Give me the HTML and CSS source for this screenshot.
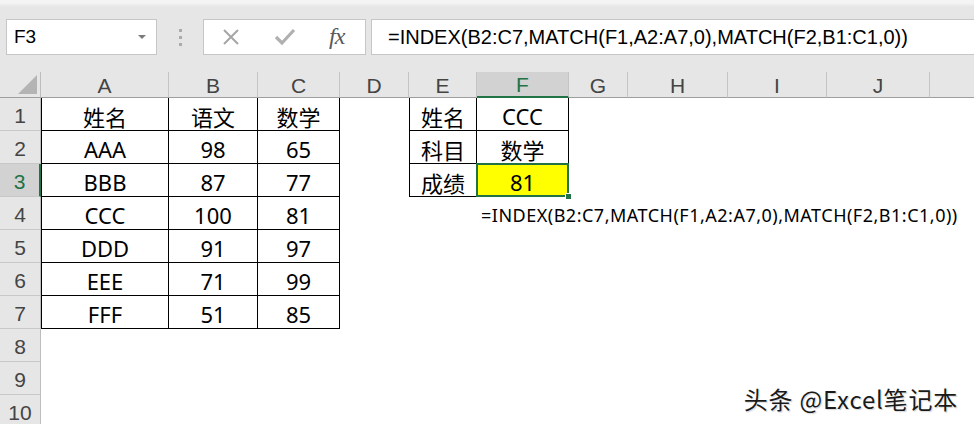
FILE: index.html
```html
<!DOCTYPE html>
<html lang="zh-CN">
<head>
<meta charset="utf-8">
<title>Excel INDEX MATCH</title>
<link rel="stylesheet" href="styles.css">
</head>
<body>
<div class="app">
  <div class="toolbar">
    <div class="namebox"><span class="ref">F3</span><span class="caret"></span></div>
    <div class="grip"><i></i><i></i><i></i></div>
    <div class="btns">
      <svg class="ico" width="20" height="20" viewBox="0 0 20 20"><path d="M3 3 L17 17 M17 3 L3 17" stroke="#a6a6a6" stroke-width="2" fill="none"/></svg>
      <svg class="ico" width="22" height="20" viewBox="0 0 22 20"><path d="M2 10 L8 16 L20 3" stroke="#b0b0b0" stroke-width="3.2" fill="none"/></svg>
      <span class="fx">fx</span>
    </div>
    <div class="formula">=INDEX(B2:C7,MATCH(F1,A2:A7,0),MATCH(F2,B1:C1,0))</div>
  </div>
  <div class="sheet">
    <div class="corner"><span class="tri"></span></div>
    <div class="ch">A</div><div class="ch">B</div><div class="ch">C</div><div class="ch">D</div><div class="ch">E</div><div class="ch sel">F</div><div class="ch">G</div><div class="ch">H</div><div class="ch">I</div><div class="ch">J</div><div class="ch last"></div>

    <div class="rh">1</div><div class="c t tl">姓名</div><div class="c t">语文</div><div class="c t">数学</div><div class="c"></div><div class="c t tl">姓名</div><div class="c t">CCC</div><div class="c"></div><div class="c"></div><div class="c"></div><div class="c"></div><div class="c"></div>
    <div class="rh">2</div><div class="c t tl">AAA</div><div class="c t">98</div><div class="c t">65</div><div class="c"></div><div class="c t tl">科目</div><div class="c t">数学</div><div class="c"></div><div class="c"></div><div class="c"></div><div class="c"></div><div class="c"></div>
    <div class="rh sel">3</div><div class="c t tl">BBB</div><div class="c t">87</div><div class="c t">77</div><div class="c"></div><div class="c t tl">成绩</div><div class="c t active">81<span class="handle"></span></div><div class="c"></div><div class="c"></div><div class="c"></div><div class="c"></div><div class="c"></div>
    <div class="rh">4</div><div class="c t tl">CCC</div><div class="c t">100</div><div class="c t">81</div><div class="c"></div><div class="c"></div><div class="c note">=INDEX(B2:C7,MATCH(F1,A2:A7,0),MATCH(F2,B1:C1,0))</div><div class="c"></div><div class="c"></div><div class="c"></div><div class="c"></div><div class="c"></div>
    <div class="rh">5</div><div class="c t tl">DDD</div><div class="c t">91</div><div class="c t">97</div><div class="c"></div><div class="c"></div><div class="c"></div><div class="c"></div><div class="c"></div><div class="c"></div><div class="c"></div><div class="c"></div>
    <div class="rh">6</div><div class="c t tl">EEE</div><div class="c t">71</div><div class="c t">99</div><div class="c"></div><div class="c"></div><div class="c"></div><div class="c"></div><div class="c"></div><div class="c"></div><div class="c"></div><div class="c"></div>
    <div class="rh">7</div><div class="c t tl">FFF</div><div class="c t">51</div><div class="c t">85</div><div class="c"></div><div class="c"></div><div class="c"></div><div class="c"></div><div class="c"></div><div class="c"></div><div class="c"></div><div class="c"></div>
    <div class="rh">8</div><div class="c"></div><div class="c"></div><div class="c"></div><div class="c"></div><div class="c"></div><div class="c"></div><div class="c"></div><div class="c"></div><div class="c"></div><div class="c"></div><div class="c"></div>
    <div class="rh">9</div><div class="c"></div><div class="c"></div><div class="c"></div><div class="c"></div><div class="c"></div><div class="c"></div><div class="c"></div><div class="c"></div><div class="c"></div><div class="c"></div><div class="c"></div>
    <div class="rh">10</div><div class="c"></div><div class="c"></div><div class="c"></div><div class="c"></div><div class="c"></div><div class="c"></div><div class="c"></div><div class="c"></div><div class="c"></div><div class="c"></div><div class="c"></div>
  </div>
  <div class="watermark">头条 @Excel笔记本</div>
</div>
</body>
</html>
```

FILE: styles.css
```css
* { box-sizing: border-box; }
html, body { margin: 0; padding: 0; }
body {
  width: 974px;
  height: 424px;
  overflow: hidden;
  background: #ffffff;
  font-family: "Noto Sans", "Noto Sans CJK SC", sans-serif;
}
.app {
  position: relative;
  width: 974px;
  height: 424px;
  overflow: hidden;
}
.toolbar {
  height: 72px;
  background: linear-gradient(#f4f4f4 0, #f4f4f4 3px, #e6e6e6 7px, #e6e6e6 100%);
  display: flex;
  align-items: flex-start;
  padding: 19px 0 0 6px;
}
.namebox {
  width: 151px;
  height: 36px;
  background: #fff;
  border: 1px solid #c6c6c6;
  display: flex;
  align-items: center;
  justify-content: space-between;
  padding: 0 10px 0 7px;
}
.ref {
  font-family: "Liberation Sans", Arial, sans-serif;
  font-size: 19px;
  color: #000;
}
.caret {
  width: 0;
  height: 0;
  border-left: 4px solid transparent;
  border-right: 4px solid transparent;
  border-top: 4px solid #7a7a7a;
}
.grip {
  width: 46px;
  height: 36px;
  display: flex;
  flex-direction: column;
  align-items: center;
  justify-content: center;
  gap: 4px;
}
.grip i {
  display: block;
  width: 3px;
  height: 3px;
  background: #ababab;
}
.btns {
  width: 163px;
  height: 36px;
  background: #fff;
  border: 1px solid #c6c6c6;
  display: flex;
  align-items: center;
  padding: 0 0 0 17px;
  gap: 33px;
}
.fx {
  font-family: "Liberation Serif", "DejaVu Serif", serif;
  font-style: italic;
  font-size: 24px;
  color: #595959;
  letter-spacing: -1px;
  margin-top: -2px;
}
.formula {
  flex: 1;
  height: 36px;
  margin-left: 5px;
  margin-right: -2px;
  background: #fff;
  border: 1px solid #c6c6c6;
  font-family: "Liberation Sans", Arial, sans-serif;
  font-size: 20px;
  line-height: 34px;
  padding-left: 16px;
  color: #000;
  white-space: nowrap;
}
.sheet {
  display: grid;
  grid-template-columns: 41px 128px 89px 82px 69px 68px 92px 59px 100px 99px 103px 1fr;
  grid-template-rows: 26px repeat(10, 33px);
  font-size: 22px;
}
.corner {
  background: #e6e6e6;
  border-right: 1px solid #bdbdbd;
  border-bottom: 1px solid #9e9e9e;
  position: relative;
}
.tri {
  position: absolute;
  right: 3px;
  bottom: 3px;
  width: 0;
  height: 0;
  border-left: 19px solid transparent;
  border-bottom: 19px solid #b4b4b4;
}
.ch {
  background: #e6e6e6;
  border-right: 1px solid #c4c4c4;
  border-bottom: 1px solid #9e9e9e;
  display: flex;
  align-items: center;
  justify-content: center;
  font-family: "Liberation Sans", Arial, sans-serif;
  font-size: 21px;
  color: #444;
  padding-top: 2px;
}
.ch.last { border-right: none; }
.ch.sel {
  background: #d2d2d2;
  color: #217346;
  border-bottom: 2px solid #217346;
}
.rh {
  background: #e6e6e6;
  border-right: 1px solid #bdbdbd;
  border-bottom: 1px solid #c8c8c8;
  display: flex;
  align-items: center;
  justify-content: center;
  font-family: "Liberation Sans", Arial, sans-serif;
  font-size: 21px;
  color: #444;
  padding-top: 3px;
}
.rh.sel {
  background: #d2d2d2;
  color: #217346;
  border-right: 2px solid #217346;
}
.c {
  display: flex;
  align-items: center;
  justify-content: center;
  color: #000;
  padding-top: 3px;
  white-space: nowrap;
  position: relative;
}
.t {
  border-right: 1px solid #000;
  border-bottom: 1px solid #000;
}
.tl { border-left: 1px solid #000; }
.active {
  background: #ffff00;
  border: 2px solid #217346;
  margin-top: -1px;
  margin-left: -1px;
}
.handle {
  position: absolute;
  right: -5px;
  bottom: -5px;
  width: 7px;
  height: 7px;
  background: #217346;
  border: 1px solid #fff;
}
.note {
  justify-content: flex-start;
  padding-left: 4px;
  font-size: 18px;
  letter-spacing: 0.5px;
  overflow: visible;
}
.watermark {
  position: absolute;
  right: 16px;
  top: 381px;
  font-family: "Noto Sans CJK SC", sans-serif;
  font-size: 24px;
  letter-spacing: 0.8px;
  color: #1a1a1a;
  text-shadow: 0 0 2px #fff, 0 0 3px #fff, 1px 1px 1px #bbb;
  white-space: nowrap;
}
```
